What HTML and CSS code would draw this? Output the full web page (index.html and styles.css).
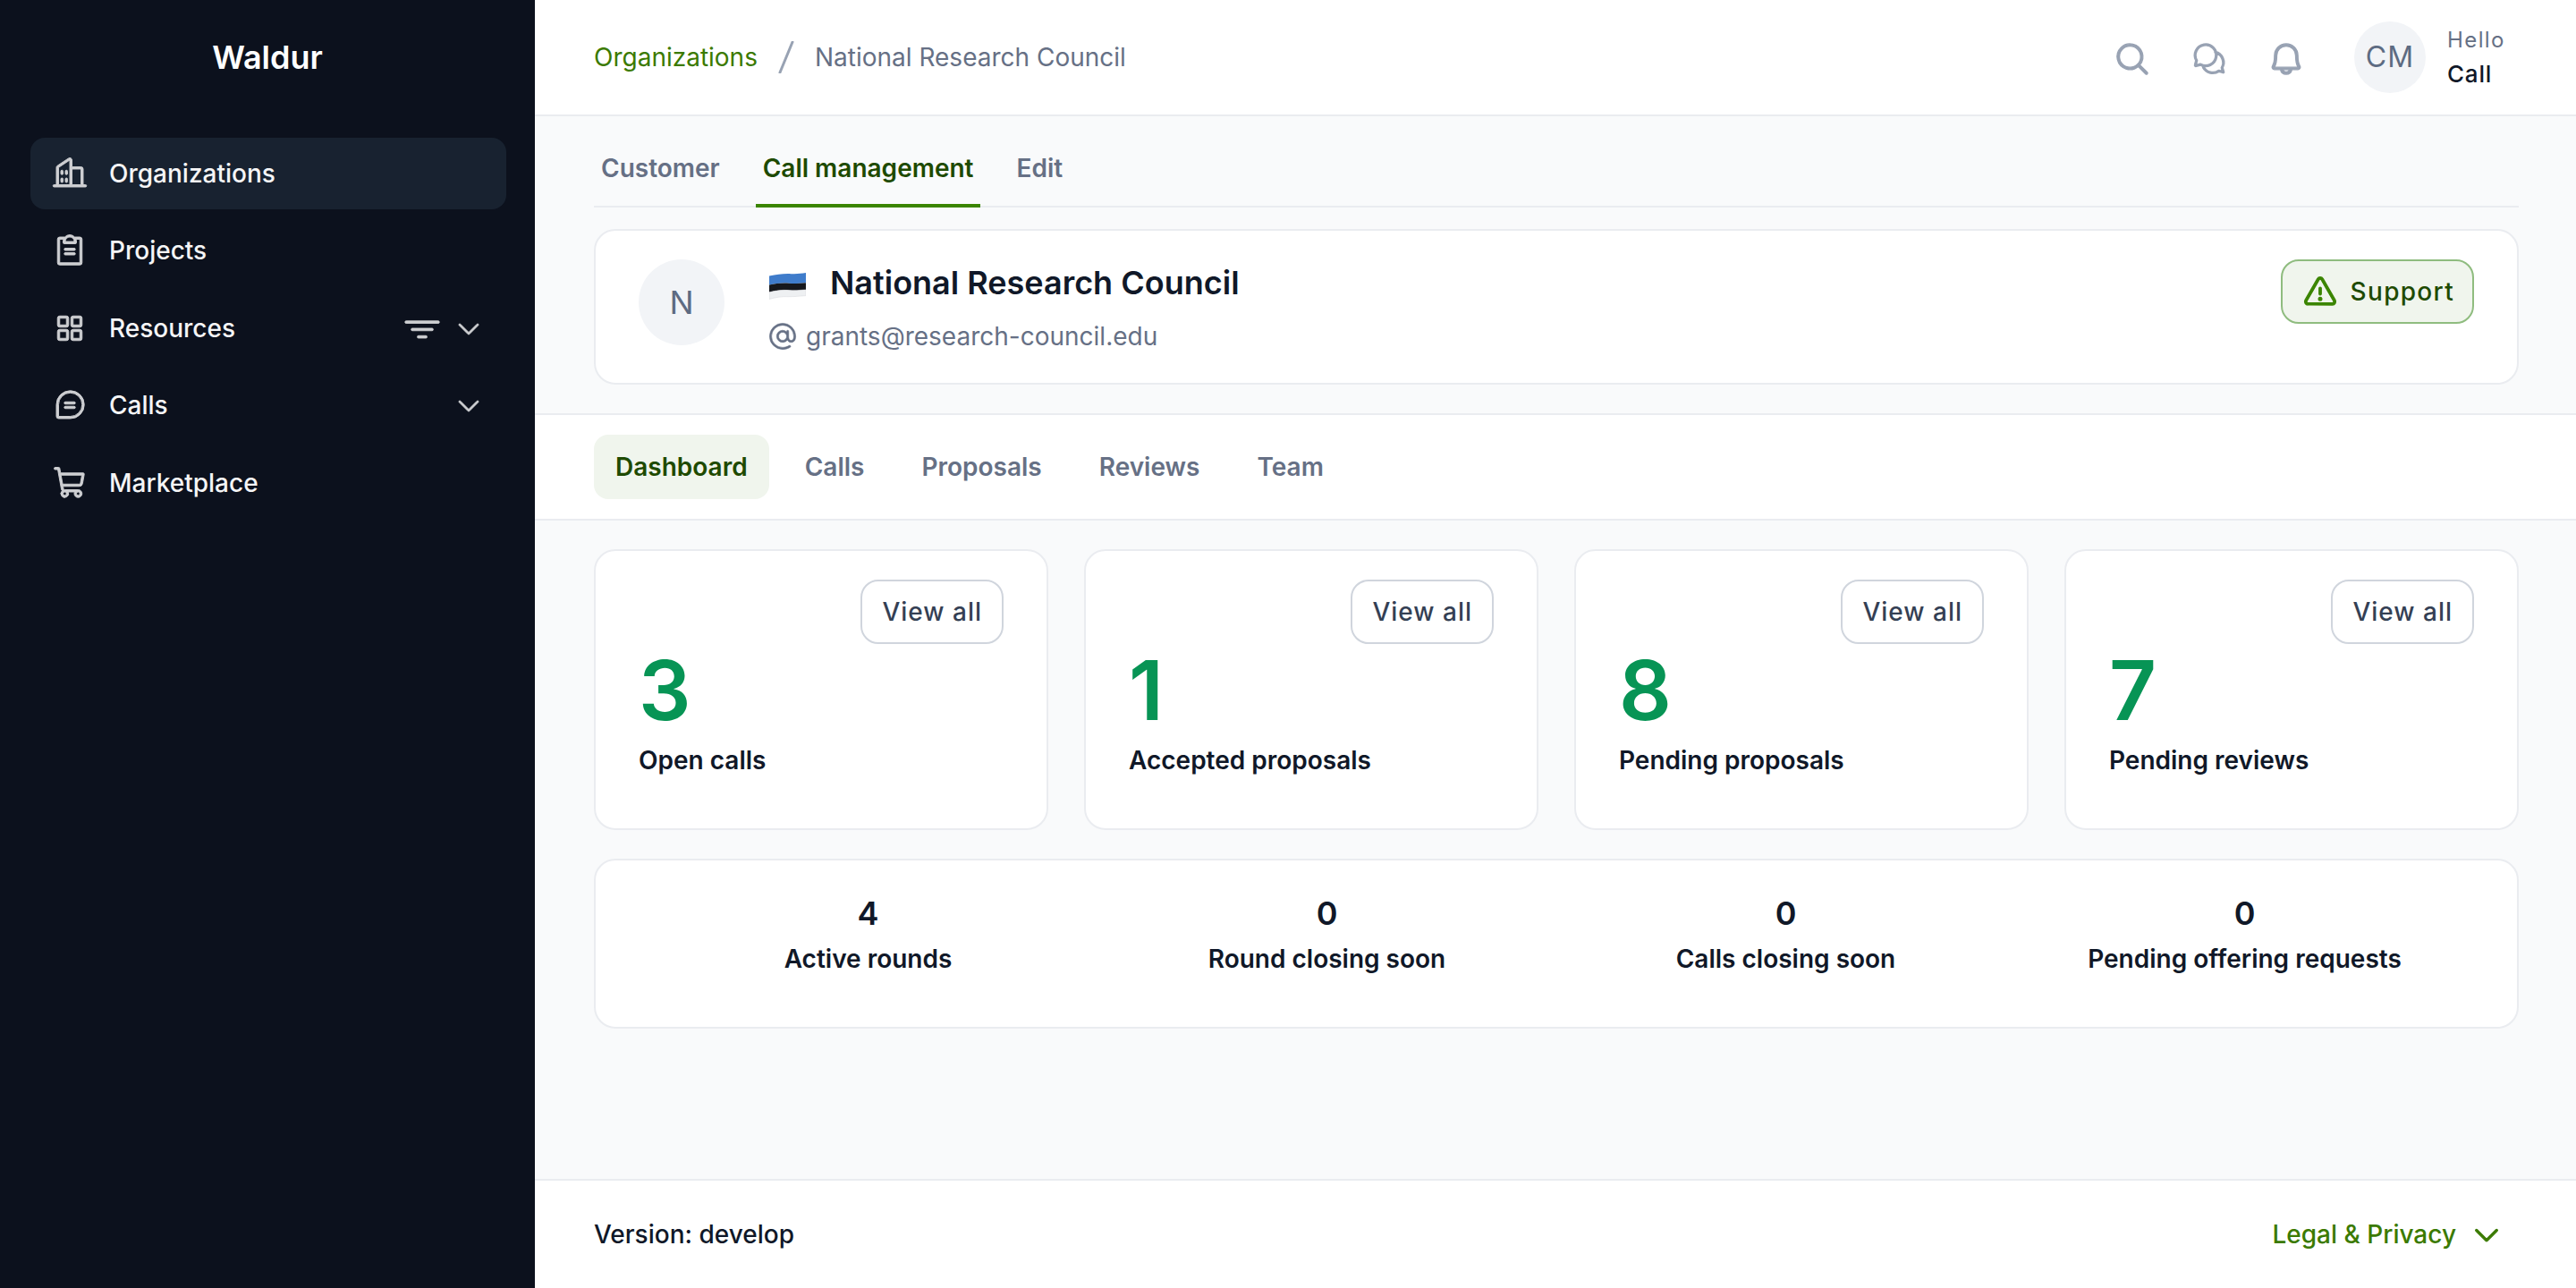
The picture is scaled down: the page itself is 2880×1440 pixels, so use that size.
FILE: index.html
```html
<!DOCTYPE html>
<html lang="en">
<head>
    <meta charset="UTF-8">
    <title>National Research Council - Waldur</title>
    <link rel="stylesheet" href="styles.css">
</head>
<body>
    <!-- Sidebar -->
    <aside class="sidebar">
        <div class="logo">Waldur</div>
        <nav class="side-nav">
            <a class="side-item active">
                <svg class="side-icon" viewBox="0 0 256 256"><path d="M240,208H224V96a16,16,0,0,0-16-16H144V32a16,16,0,0,0-24.88-13.32L39.12,72A16,16,0,0,0,32,85.34V208H16a8,8,0,0,0,0,16H240a8,8,0,0,0,0-16ZM208,96V208H144V96ZM48,85.34,128,32V208H48ZM112,112v16a8,8,0,0,1-16,0V112a8,8,0,1,1,16,0Zm-32,0v16a8,8,0,0,1-16,0V112a8,8,0,1,1,16,0Zm0,56v16a8,8,0,0,1-16,0V168a8,8,0,0,1,16,0Zm32,0v16a8,8,0,0,1-16,0V168a8,8,0,0,1,16,0Z"/></svg>
                <span class="side-label">Organizations</span>
            </a>
            <a class="side-item">
                <svg class="side-icon" viewBox="0 0 256 256"><path d="M168,152a8,8,0,0,1-8,8H96a8,8,0,0,1,0-16h64A8,8,0,0,1,168,152Zm-8-40H96a8,8,0,0,0,0,16h64a8,8,0,0,0,0-16Zm56-64V216a16,16,0,0,1-16,16H56a16,16,0,0,1-16-16V48A16,16,0,0,1,56,32H92.26a47.92,47.92,0,0,1,71.48,0H200A16,16,0,0,1,216,48ZM96,64h64a32,32,0,0,0-64,0ZM200,48H173.25A47.93,47.93,0,0,1,176,64v8a8,8,0,0,1-8,8H88a8,8,0,0,1-8-8V64a47.93,47.93,0,0,1,2.75-16H56V216H200Z"/></svg>
                <span class="side-label">Projects</span>
            </a>
            <a class="side-item">
                <svg class="side-icon" viewBox="0 0 256 256"><path d="M104,40H56A16,16,0,0,0,40,56v48a16,16,0,0,0,16,16h48a16,16,0,0,0,16-16V56A16,16,0,0,0,104,40Zm0,64H56V56h48Zm96-64H152a16,16,0,0,0-16,16v48a16,16,0,0,0,16,16h48a16,16,0,0,0,16-16V56A16,16,0,0,0,200,40Zm0,64H152V56h48Zm-96,32H56a16,16,0,0,0-16,16v48a16,16,0,0,0,16,16h48a16,16,0,0,0,16-16V152A16,16,0,0,0,104,136Zm0,64H56V152h48Zm96-64H152a16,16,0,0,0-16,16v48a16,16,0,0,0,16,16h48a16,16,0,0,0,16-16V152A16,16,0,0,0,200,136Zm0,64H152V152h48Z"/></svg>
                <span class="side-label">Resources</span>
                <svg class="side-filter" viewBox="0 0 256 256"><path d="M200,136a8,8,0,0,1-8,8H64a8,8,0,0,1,0-16H192A8,8,0,0,1,200,136Zm32-56H24a8,8,0,0,0,0,16H232a8,8,0,0,0,0-16Zm-80,96H104a8,8,0,0,0,0,16h48a8,8,0,0,0,0-16Z"/></svg>
                <svg class="side-caret" viewBox="0 0 256 256"><path d="M213.66,101.66l-80,80a8,8,0,0,1-11.32,0l-80-80A8,8,0,0,1,53.66,90.34L128,164.69l74.34-74.35a8,8,0,0,1,11.32,11.32Z"/></svg>
            </a>
            <a class="side-item">
                <svg class="side-icon" viewBox="0 0 256 256"><path d="M168,112a8,8,0,0,1-8,8H96a8,8,0,0,1,0-16h64A8,8,0,0,1,168,112Zm-8,24H96a8,8,0,0,0,0,16h64a8,8,0,0,0,0-16Zm72-12A100.11,100.11,0,0,1,132,224H47.67A15.69,15.69,0,0,1,32,208.33V124a100,100,0,0,1,200,0Zm-16,0a84,84,0,0,0-168,0v84h84A84.09,84.09,0,0,0,216,124Z"/></svg>
                <span class="side-label">Calls</span>
                <svg class="side-caret" viewBox="0 0 256 256"><path d="M213.66,101.66l-80,80a8,8,0,0,1-11.32,0l-80-80A8,8,0,0,1,53.66,90.34L128,164.69l74.34-74.35a8,8,0,0,1,11.32,11.32Z"/></svg>
            </a>
            <a class="side-item">
                <svg class="side-icon" viewBox="0 0 256 256"><path d="M230.14,58.87A8,8,0,0,0,224,56H62.68L56.6,22.57A8,8,0,0,0,48.73,16H24a8,8,0,0,0,0,16h18L67.56,172.29a24,24,0,0,0,5.33,11.27,28,28,0,1,0,44.4,8.44h45.42A27.75,27.75,0,0,0,160,204a28,28,0,1,0,28-28H91.17a8,8,0,0,1-7.87-6.57L80.13,152h116a24,24,0,0,0,23.61-19.71l12.16-66.86A8,8,0,0,0,230.14,58.87ZM104,204a12,12,0,1,1-12-12A12,12,0,0,1,104,204Zm96,0a12,12,0,1,1-12-12A12,12,0,0,1,200,204Zm4-74.57A8,8,0,0,1,196.1,136H77.22L65.59,72H214.41Z"/></svg>
                <span class="side-label">Marketplace</span>
            </a>
        </nav>
    </aside>

    <div class="main">
        <!-- Top bar -->
        <header class="topbar">
            <div class="breadcrumb">
                <a class="crumb-link">Organizations</a>
                <svg class="crumb-slash" viewBox="0 0 18 36"><path d="M16 1 L2 35"/></svg>
                <span class="crumb-current">National Research Council</span>
            </div>
            <div class="top-actions">
                <svg class="top-icon" viewBox="0 0 256 256"><path d="M229.66,218.34l-50.07-50.06a88.11,88.11,0,1,0-11.31,11.31l50.06,50.07a8,8,0,0,0,11.32-11.32ZM40,112a72,72,0,1,1,72,72A72.08,72.08,0,0,1,40,112Z"/></svg>
                <svg class="top-icon chats" viewBox="0 0 256 256"><path d="M41,138 A72,72 0 1,1 68,165 L38,174 a4,4 0 0 1-5-5 Z M170,82 A72,72 0 0 1 215,187 L224,218 L193,209 A72,72 0 0 1 88,184"/></svg>
                <svg class="top-icon" viewBox="0 0 256 256"><path d="M221.8,175.94C216.25,166.38,208,139.33,208,104a80,80,0,1,0-160,0c0,35.34-8.26,62.38-13.81,71.94A16,16,0,0,0,48,200H88.81a40,40,0,0,0,78.38,0H208a16,16,0,0,0,13.8-24.06ZM128,216a24,24,0,0,1-22.62-16h45.24A24,24,0,0,1,128,216ZM48,184c7.7-13.24,16-43.92,16-80a64,64,0,1,1,128,0c0,36.05,8.28,66.73,16,80Z"/></svg>
                <div class="user">
                    <div class="avatar avatar-sm">CM</div>
                    <div class="user-text">
                        <div class="user-hello">Hello</div>
                        <div class="user-name">Call</div>
                    </div>
                </div>
            </div>
        </header>

        <!-- Organization header -->
        <section class="org-section">
            <div class="org-tabs">
                <a class="org-tab">Customer</a>
                <a class="org-tab active">Call management</a>
                <a class="org-tab">Edit</a>
            </div>
            <div class="card org-card">
                <div class="avatar avatar-lg">N</div>
                <div class="org-info">
                    <div class="org-title">
                        <svg class="flag" viewBox="0 0 37 28">
                            <path fill="#3f7ccb" d="M0 4 C8 3 14 1.500 22 2 C28 2.500 32 1.500 37 1 V11 C30 11.500 26 12 20 11.500 C12 11 6 12 0 13 Z"/>
                            <path fill="#16181d" d="M0 13 C6 12 12 11 20 11.500 C26 12 30 11.500 37 11 V18 C30 18.500 26 19 20 18.500 C12 18 6 19 0 20.500 Z"/>
                            <path fill="#eef0f2" stroke="#d8dade" stroke-width="0.5" d="M0 20.500 C6 19 12 18 20 18.500 C26 19 30 18.500 37 18 V24 C30 24.500 26 25 20 25 C12 24.500 6 26 0 27.500 Z"/>
                        </svg>
                        <span class="org-name">National Research Council</span>
                    </div>
                    <div class="org-email">
                        <svg class="at-icon" viewBox="0 0 256 256"><path d="M128,24a104,104,0,0,0,0,208c21.51,0,44.1-6.48,60.43-17.33a8,8,0,0,0-8.86-13.33C166,210.38,146.21,216,128,216a88,88,0,1,1,88-88c0,26.45-10.88,32-20,32s-20-5.55-20-32V88a8,8,0,0,0-16,0v4.26a48,48,0,1,0,5.93,65.1c6,12,16.35,18.64,30.07,18.64,22.54,0,36-17.94,36-48A104.11,104.11,0,0,0,128,24Zm0,136a32,32,0,1,1,32-32A32,32,0,0,1,128,160Z"/></svg>
                        <span>grants@research-council.edu</span>
                    </div>
                </div>
                <button class="support-btn">
                    <svg class="support-icon" viewBox="0 0 256 256"><path d="M236.8,188.09,149.35,36.22h0a24.76,24.76,0,0,0-42.7,0L19.2,188.09a23.51,23.51,0,0,0,0,23.72A24.35,24.35,0,0,0,40.55,224h174.9a24.35,24.35,0,0,0,21.33-12.19A23.51,23.51,0,0,0,236.8,188.09ZM222.93,203.8a8.5,8.5,0,0,1-7.48,4.2H40.55a8.5,8.5,0,0,1-7.48-4.2,7.59,7.59,0,0,1,0-7.72L120.52,44.21a8.75,8.75,0,0,1,15,0l87.45,151.87A7.59,7.59,0,0,1,222.93,203.8ZM120,144V104a8,8,0,0,1,16,0v40a8,8,0,0,1-16,0Zm20,36a12,12,0,1,1-12-12A12,12,0,0,1,140,180Z"/></svg>
                    Support
                </button>
            </div>
        </section>

        <!-- Page tabs -->
        <div class="page-tabs">
            <a class="page-tab active">Dashboard</a>
            <a class="page-tab">Calls</a>
            <a class="page-tab">Proposals</a>
            <a class="page-tab">Reviews</a>
            <a class="page-tab">Team</a>
        </div>

        <!-- Dashboard -->
        <main class="content">
            <div class="stat-grid">
                <div class="card stat-card">
                    <button class="view-btn">View all</button>
                    <div class="stat-value">3</div>
                    <div class="stat-label">Open calls</div>
                </div>
                <div class="card stat-card">
                    <button class="view-btn">View all</button>
                    <div class="stat-value">1</div>
                    <div class="stat-label">Accepted proposals</div>
                </div>
                <div class="card stat-card">
                    <button class="view-btn">View all</button>
                    <div class="stat-value">8</div>
                    <div class="stat-label">Pending proposals</div>
                </div>
                <div class="card stat-card">
                    <button class="view-btn">View all</button>
                    <div class="stat-value">7</div>
                    <div class="stat-label">Pending reviews</div>
                </div>
            </div>
            <div class="card summary-card">
                <div class="summary-item"><div class="summary-value">4</div><div class="summary-label">Active rounds</div></div>
                <div class="summary-item"><div class="summary-value">0</div><div class="summary-label">Round closing soon</div></div>
                <div class="summary-item"><div class="summary-value">0</div><div class="summary-label">Calls closing soon</div></div>
                <div class="summary-item"><div class="summary-value">0</div><div class="summary-label">Pending offering requests</div></div>
            </div>
        </main>

        <footer class="footer">
            <span class="version">Version: develop</span>
            <a class="legal">
                Legal &amp; Privacy
                <svg class="legal-caret" viewBox="0 0 256 256"><path d="M213.66,101.66l-80,80a8,8,0,0,1-11.32,0l-80-80A8,8,0,0,1,53.66,90.34L128,164.69l74.34-74.35a8,8,0,0,1,11.32,11.32Z"/></svg>
            </a>
        </footer>
    </div>
</body>
</html>
```

FILE: styles.css
```css
* {
    box-sizing: border-box;
    margin: 0;
    padding: 0;
}
body {
    font-family: Inter, "Noto Sans", sans-serif;
    font-size: 28px;
    line-height: 40px;
    color: #101828;
    background-color: #f9fafb;
    display: flex;
    height: 1440px;
    overflow: hidden;
}
svg {
    display: block;
    flex-shrink: 0;
    fill: currentColor;
}
button {
    font-family: inherit;
}

/* Sidebar */
.sidebar {
    width: 598px;
    flex-shrink: 0;
    background-color: #0c111d;
    padding: 0 32px 0 34px;
}
.logo {
    height: 128px;
    line-height: 128px;
    padding-right: 2px;
    text-align: center;
    color: #fff;
    font-size: 36px;
    font-weight: 600;
}
.side-nav {
    margin-top: 26px;
    display: flex;
    flex-direction: column;
    gap: 6.4px;
}
.side-item {
    display: flex;
    align-items: center;
    height: 80px;
    padding: 0 26px 0 24px;
    border-radius: 16px;
    color: #f5f5f6;
    font-weight: 500;
}
.side-item.active {
    background-color: #182230;
}
.side-icon {
    width: 40px;
    height: 40px;
    margin-right: 24px;
    color: #cecfd2;
    stroke: currentColor;
    stroke-width: 6px;
}
.side-label {
    flex: 1;
}
.side-filter {
    width: 44px;
    height: 44px;
    margin-right: 14px;
    color: #cecfd2;
    stroke: currentColor;
    stroke-width: 5px;
}
.side-caret {
    width: 32px;
    height: 32px;
    color: #cecfd2;
    stroke: currentColor;
    stroke-width: 8px;
}

/* Top bar */
.main {
    flex: 1;
    min-width: 0;
    display: flex;
    flex-direction: column;
}
.topbar {
    height: 130px;
    flex-shrink: 0;
    display: flex;
    align-items: center;
    justify-content: space-between;
    padding: 0 64px 0 66px;
    background-color: #fff;
    border-bottom: 2px solid #eaecf0;
}
.breadcrumb {
    display: flex;
    align-items: center;
}
.crumb-link {
    color: #3b7a00;
}
.crumb-slash {
    width: 18px;
    height: 36px;
    margin: 0 23px;
    fill: none;
    stroke: #98a2b3;
    stroke-width: 3px;
    stroke-linecap: round;
}
.crumb-current {
    color: #667085;
}
.top-actions {
    display: flex;
    align-items: center;
}
.top-icon {
    width: 42px;
    height: 42px;
    margin: 4px 44px 0 0;
    color: #98a2b3;
    stroke: currentColor;
    stroke-width: 8px;
}
.top-icon.chats {
    fill: none;
    stroke-width: 20px;
    stroke-linejoin: round;
    stroke-linecap: round;
}
.user {
    display: flex;
    align-items: center;
    gap: 24px;
    width: 184px;
    margin-left: 11px;
}
.avatar {
    display: flex;
    align-items: center;
    justify-content: center;
    flex-shrink: 0;
    border-radius: 50%;
    background-color: #f2f4f7;
    color: #5d6b82;
}
.avatar-sm {
    width: 80px;
    height: 80px;
    font-size: 32px;
    letter-spacing: 1px;
}
.avatar-lg {
    width: 96px;
    height: 96px;
    font-size: 36px;
}
.user-hello {
    font-size: 24px;
    line-height: 38px;
    letter-spacing: 1.4px;
    color: #667085;
}
.user-name {
    font-size: 26px;
    line-height: 38px;
    font-weight: 500;
    letter-spacing: 0.8px;
}

/* Organization header */
.org-section {
    padding: 14px 64px 32px 66px;
}
.org-tabs {
    display: flex;
    gap: 32px;
    border-bottom: 2px solid #eaecf0;
}
.org-tab {
    height: 88px;
    line-height: 88px;
    padding: 0 8px;
    margin-bottom: -2px;
    font-weight: 600;
    color: #667085;
    border-bottom: 4px solid transparent;
}
.org-tab.active {
    color: #1e4a00;
    border-bottom-color: #3b8500;
}
.card {
    background: #fff;
    border: 2px solid #eaecf0;
    border-radius: 24px;
}
.org-card {
    margin-top: 24px;
    height: 174px;
    display: flex;
    padding: 32px 48px;
}
.org-info {
    flex: 1;
    margin-left: 50px;
}
.org-title {
    display: flex;
    align-items: center;
    height: 52px;
}
.flag {
    width: 41px;
    height: 31px;
    margin: 7px 27px 0 0;
}
.org-name {
    font-size: 36px;
    font-weight: 600;
}
.org-email {
    display: flex;
    align-items: center;
    gap: 8px;
    margin-top: 14px;
    color: #667085;
}
.at-icon {
    width: 36px;
    height: 36px;
    margin-left: -3px;
    stroke: currentColor;
    stroke-width: 4px;
}
.support-btn {
    display: flex;
    align-items: center;
    gap: 14px;
    height: 72px;
    padding: 0 20px 0 22px;
    font-size: 28px;
    font-weight: 450;
    letter-spacing: 1.3px;
    color: #1e4a00;
    background-color: #f0f5ed;
    border: 2px solid #8fbc7f;
    border-radius: 20px;
}
.support-icon {
    width: 40px;
    height: 40px;
    color: #3b8500;
    stroke: currentColor;
    stroke-width: 8px;
}

/* Page tabs */
.page-tabs {
    display: flex;
    gap: 16px;
    height: 120px;
    padding: 22px 64px 22px 66px;
    background-color: #fff;
    border-top: 2px solid #eaecf0;
    border-bottom: 2px solid #eaecf0;
    flex-shrink: 0;
}
.page-tab {
    height: 72px;
    line-height: 72px;
    padding: 0 24px;
    border-radius: 16px;
    font-weight: 600;
    color: #667085;
}
.page-tab.active {
    background-color: #f0f5ed;
    color: #1e4a00;
}

/* Dashboard */
.content {
    flex: 1;
    padding: 32px 64px 32px 66px;
}
.stat-grid {
    display: grid;
    grid-template-columns: repeat(4, 1fr);
    gap: 40px;
}
.stat-card {
    height: 314px;
    padding: 32px 48px;
    display: flex;
    flex-direction: column;
}
.view-btn {
    align-self: flex-end;
    height: 72px;
    padding: 0 22px;
    font-size: 28px;
    font-weight: 450;
    letter-spacing: 1px;
    color: #344054;
    background: #fff;
    border: 2px solid #d0d5dd;
    border-radius: 20px;
}
.stat-value {
    height: 104px;
    line-height: 104px;
    font-size: 92px;
    font-weight: 600;
    color: #079455;
}
.stat-label {
    margin-top: 6px;
    font-weight: 600;
}
.summary-card {
    margin-top: 32px;
    height: 190px;
    padding: 35px 48px 0;
    display: grid;
    grid-template-columns: repeat(4, 1fr);
    text-align: center;
}
.summary-value {
    font-size: 36px;
    line-height: 48px;
    font-weight: 600;
}
.summary-label {
    margin-top: 7px;
    font-weight: 600;
}

/* Footer */
.footer {
    height: 122px;
    flex-shrink: 0;
    display: flex;
    align-items: center;
    justify-content: space-between;
    padding: 0 82px 0 66px;
    background-color: #fff;
    border-top: 2px solid #eaecf0;
}
.version {
    font-weight: 500;
}
.legal {
    display: flex;
    align-items: center;
    gap: 16px;
    color: #3b7a00;
    font-weight: 500;
}
.legal-caret {
    width: 36px;
    height: 36px;
    stroke: currentColor;
    stroke-width: 8px;
}
```
